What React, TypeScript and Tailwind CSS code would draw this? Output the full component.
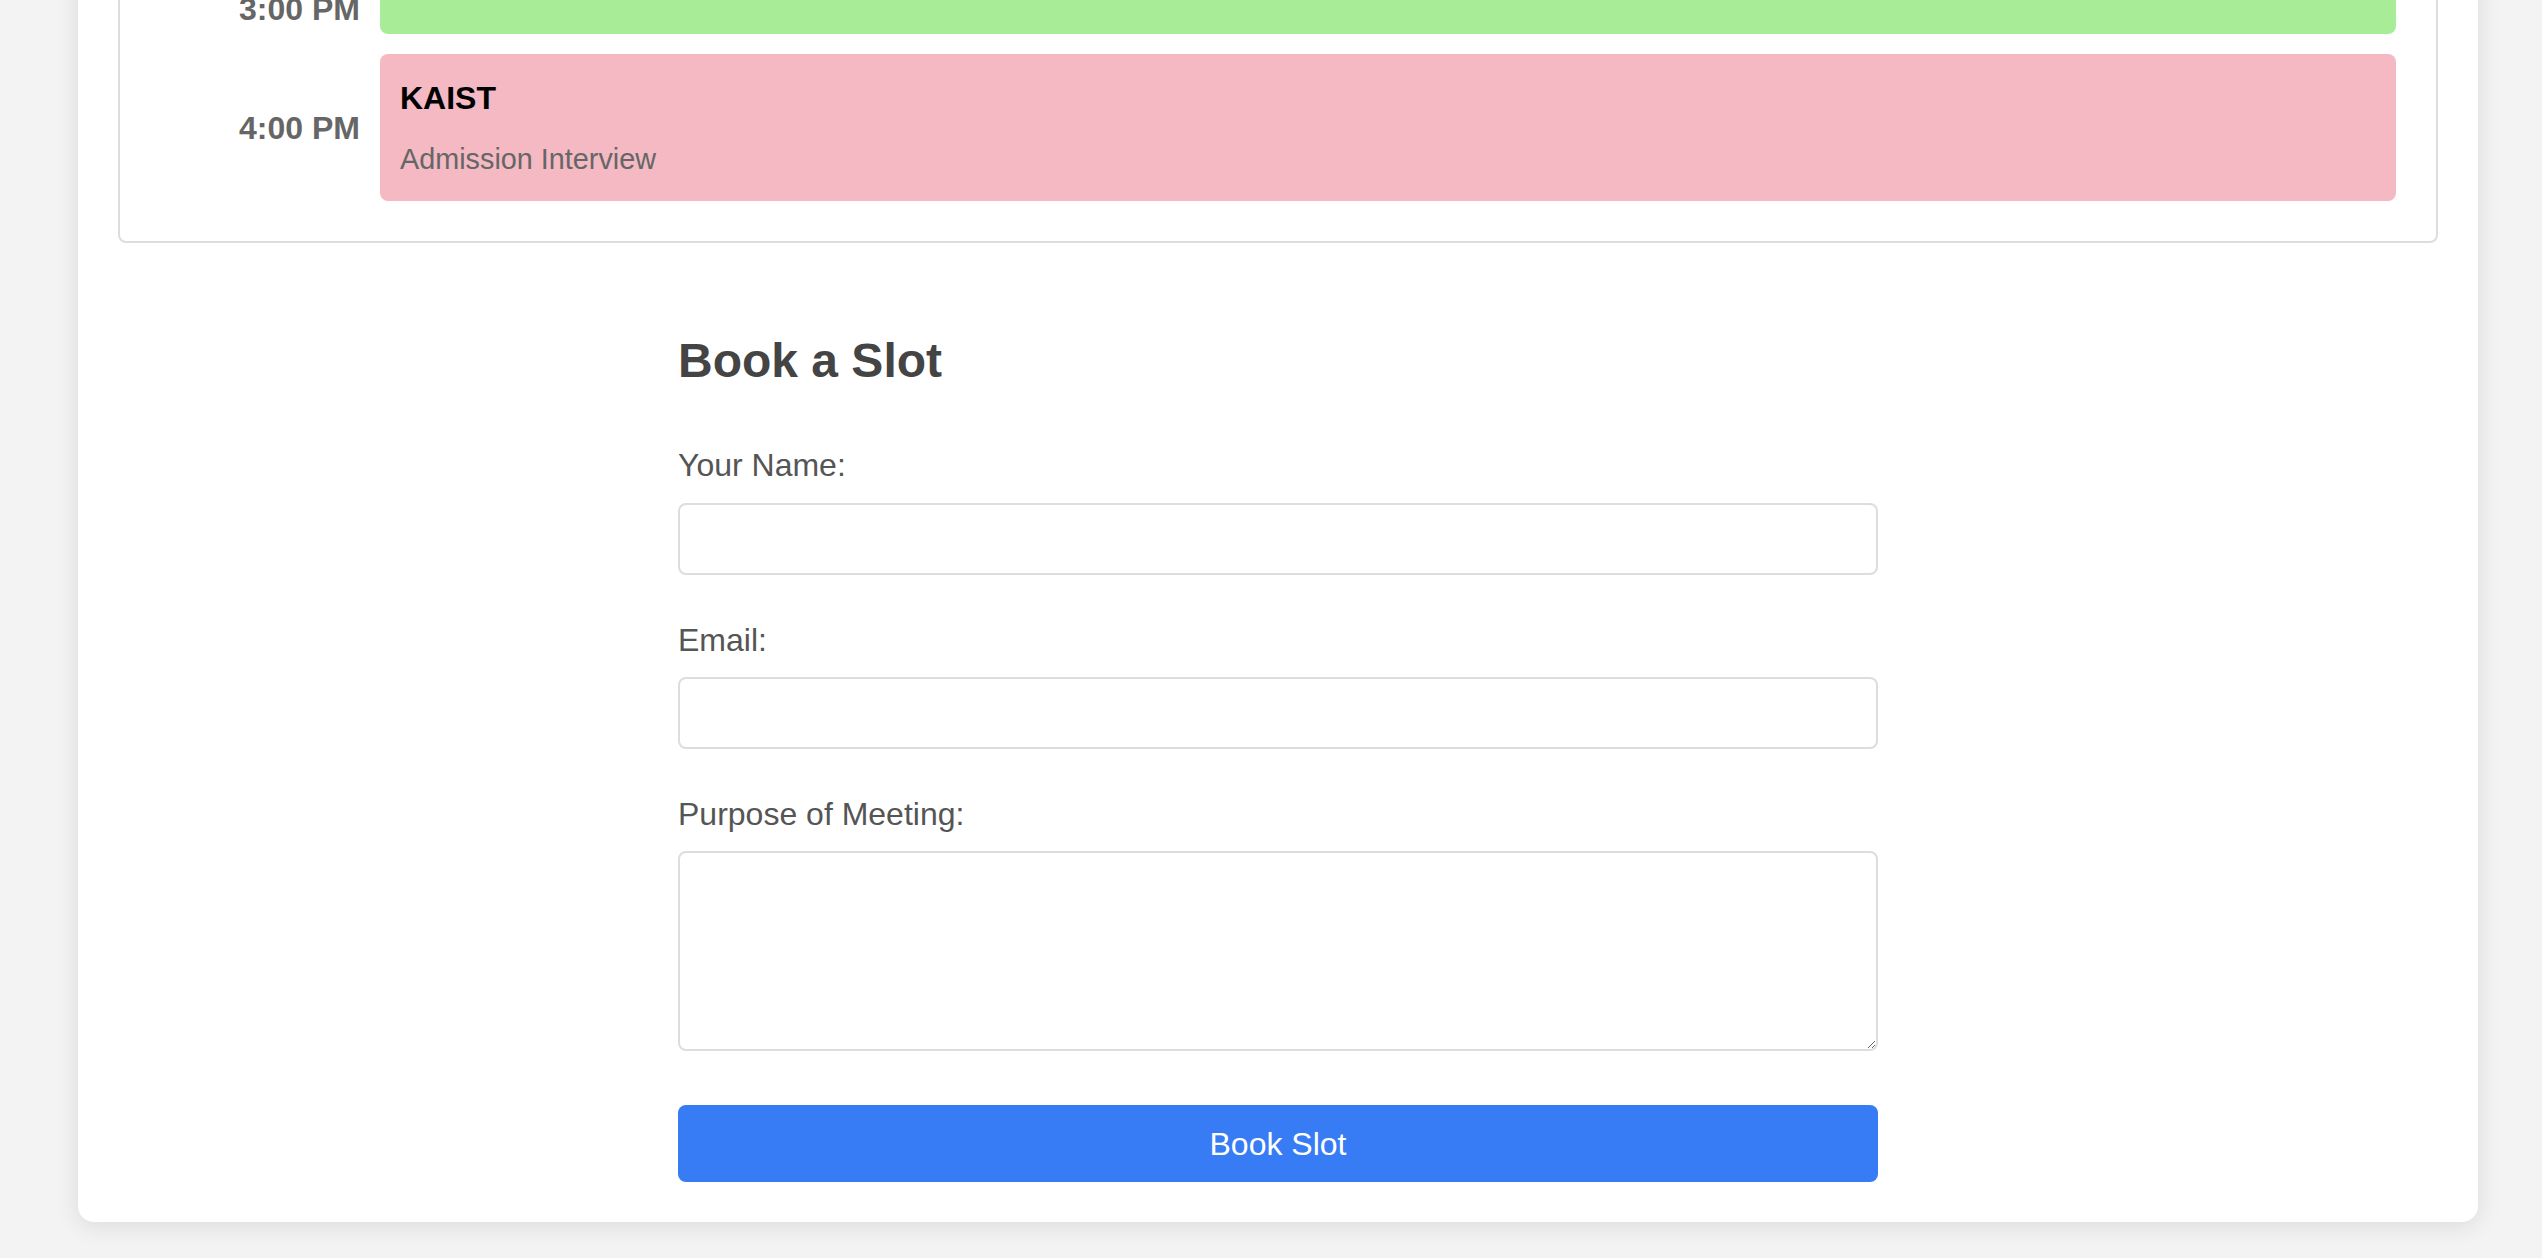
import { useState } from "react";

type Slot = {
  time: string;
  title?: string;
  note?: string;
  color: string;
  height?: string;
};

const slots: Slot[] = [
  { time: "3:00 PM", color: "bg-[#a8ec98]", height: "h-[50px]" },
  { time: "4:00 PM", title: "KAIST", note: "Admission Interview", color: "bg-[#f4b9c3]" },
];

function SlotRow({ slot }: { slot: Slot }) {
  return (
    <div className="flex items-center gap-[20px]">
      <div className="w-[200px] shrink-0 text-right text-[32px] leading-[48px] font-bold text-[#666]">
        {slot.time}
      </div>
      <div className={`flex-1 rounded-[8px] ${slot.color} ${slot.height ?? "px-[20px] pt-[20px] pb-[21px]"}`}>
        {slot.title ? (
          <>
            <div className="text-[32px] leading-[48px] font-bold text-black">{slot.title}</div>
            <div className="mt-[16px] text-[28.8px] leading-[42px] text-[#666]">{slot.note}</div>
          </>
        ) : null}
      </div>
    </div>
  );
}

export default function App() {
  const [name, setName] = useState("");
  const [email, setEmail] = useState("");
  const [purpose, setPurpose] = useState("");

  const fieldClass =
    "block w-full rounded-[8px] border-2 border-[#ddd] bg-white px-[20px] text-[32px] text-[#333] outline-none";

  return (
    <div className="min-h-screen overflow-hidden bg-[#f3f3f3] font-['Liberation_Sans',Arial,sans-serif]">
      <div className="-mt-[98px] ml-[78px] w-[2400px] rounded-[16px] bg-white p-[40px] shadow-[0_4px_24px_rgba(0,0,0,0.1)]">
        {/* schedule */}
        <div className="flex flex-col gap-[20px] rounded-[8px] border-2 border-[#ddd] p-[40px]">
          {slots.map((s) => (
            <SlotRow key={s.time} slot={s} />
          ))}
        </div>

        {/* booking form */}
        <form className="mx-auto mt-[90px] w-[1200px]" onSubmit={(e) => e.preventDefault()}>
          <h2 className="text-[48px] leading-[56px] font-bold text-[#444]">Book a Slot</h2>

          <label className="mt-[56px] block text-[32px] leading-[40px] text-[#555]">Your Name:</label>
          <input
            type="text"
            value={name}
            onChange={(e) => setName(e.target.value)}
            className={`mt-[18px] h-[72px] ${fieldClass}`}
          />

          <label className="mt-[45px] block text-[32px] leading-[40px] text-[#555]">Email:</label>
          <input
            type="email"
            value={email}
            onChange={(e) => setEmail(e.target.value)}
            className={`mt-[17px] h-[72px] ${fieldClass}`}
          />

          <label className="mt-[45px] block text-[32px] leading-[40px] text-[#555]">Purpose of Meeting:</label>
          <textarea
            value={purpose}
            onChange={(e) => setPurpose(e.target.value)}
            className={`mt-[17px] h-[200px] py-[16px] ${fieldClass}`}
          />

          <button
            type="submit"
            className="mt-[54px] block h-[77px] w-full rounded-[8px] bg-[#377bf5] text-[32px] text-white"
          >
            Book Slot
          </button>
        </form>
      </div>
    </div>
  );
}
